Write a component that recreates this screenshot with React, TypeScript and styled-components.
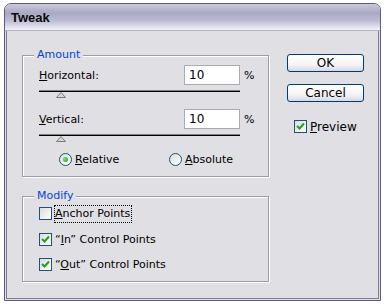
import React from 'react';
import styled, { createGlobalStyle } from 'styled-components';

const Global = createGlobalStyle`
  html, body { margin: 0; padding: 0; background: #fff; }
  body { font-family: "DejaVu Sans", sans-serif; font-size: 11px; color: #000; }
  * { box-sizing: border-box; }
`;

const Window = styled.div`
  margin: 3px 0 0 4px;
  width: 377px;
  height: 298px;
  border: 1px solid #5d5c7e;
  border-radius: 7px 7px 0 0;
  background: #e0dfe3;
  display: flex;
  flex-direction: column;
  overflow: hidden;
`;

const TitleBar = styled.div`
  height: 27px;
  flex: none;
  display: flex;
  align-items: center;
  padding-left: 6px;
  padding-top: 1px;
  background: linear-gradient(#c9c8da 0%, #a9a8c3 35%, #bebdd3 65%, #f1f1f7 100%);
  border-bottom: 1px solid #b4b3c4;
  font-family: "Liberation Sans", Arial, sans-serif;
  font-weight: bold;
  font-size: 13px;
  color: #0a0a0a;
`;

const Body = styled.div`
  flex: 1;
  margin: 0 1px 1px;
  border: 1px solid #7b7a98;
  border-top: none;
  display: flex;
  padding-left: 15px;
`;

const LeftCol = styled.div`
  width: 247px;
  padding-top: 24px;
  display: flex;
  flex-direction: column;
  gap: 19px;
`;

const RightCol = styled.div`
  margin-left: 18px;
  padding-top: 23px;
  width: 77px;
  display: flex;
  flex-direction: column;
`;

const Group = styled.div<{ $h: number }>`
  position: relative;
  height: ${p => p.$h}px;
  border: 1px solid #9d9ca4;
  box-shadow: 1px 1px 0 #fff, inset 1px 1px 0 #fff;
  padding-left: 16px;
`;

const Legend = styled.span`
  position: absolute;
  top: -8px;
  left: 11px;
  padding: 0 3px;
  background: #e0dfe3;
  color: #0046d5;
  line-height: 14px;
`;

const FieldRow = styled.div<{ $top: number }>`
  margin-top: ${p => p.$top}px;
  display: grid;
  grid-template-columns: 141px 56px auto;
  column-gap: 4px;
  align-items: center;
`;

const Label = styled.span``;

const Key = styled.span`
  text-decoration: underline;
`;

const NumInput = styled.div`
  height: 20px;
  background: #fff;
  border: 1px solid #a5acb5;
  padding-left: 4px;
  display: flex;
  align-items: center;
  font-size: 12px;
`;

const Slider = styled.div`
  margin-top: 5px;
  width: 201px;
  height: 8px;
  position: relative;
`;

const Track = styled.div`
  height: 2px;
  border-top: 1px solid #808080;
  border-bottom: 1px solid #000;
`;

const Thumb = styled.svg`
  position: absolute;
  left: 17px;
  top: 2px;
`;

const RadioRow = styled.div`
  margin-top: 11px;
  display: flex;
  padding-left: 20px;
`;

const RadioItem = styled.label<{ $w?: number }>`
  display: flex;
  align-items: center;
  gap: 3px;
  width: ${p => (p.$w ? `${p.$w}px` : 'auto')};
`;

const RadioCircle = styled.span<{ $on?: boolean }>`
  width: 13px;
  height: 13px;
  border-radius: 50%;
  border: 1px solid #1c5180;
  background: linear-gradient(135deg, #dcdcd7, #ffffff);
  display: flex;
  align-items: center;
  justify-content: center;
  &::after {
    content: '';
    display: ${p => (p.$on ? 'block' : 'none')};
    width: 5px;
    height: 5px;
    border-radius: 50%;
    background: radial-gradient(circle at 35% 35%, #6ee36a, #21a121);
  }
`;

const CheckRow = styled.label<{ $top: number }>`
  margin-top: ${p => p.$top}px;
  display: flex;
  align-items: center;
  gap: 3px;
  height: 13px;
`;

const Box = styled.span`
  width: 13px;
  height: 13px;
  flex: none;
  border: 1px solid #1c5180;
  background: linear-gradient(135deg, #dcdcd7, #ffffff);
  display: flex;
  align-items: center;
  justify-content: center;
`;

const Focus = styled.span`
  outline: 1px dotted #000;
  outline-offset: 0px;
  padding: 1px 1px 2px 0px;
`;

const Button = styled.div<{ $top: number }>`
  margin-top: ${p => p.$top}px;
  height: 18px;
  border: 1px solid #003c74;
  border-radius: 3px;
  background: linear-gradient(#ffffff 0%, #f4f4f7 60%, #d8d8e2 100%);
  display: flex;
  align-items: center;
  justify-content: center;
  font-size: 12px;
`;

const PreviewRow = styled.label`
  margin-top: 18px;
  margin-left: 7px;
  display: flex;
  align-items: center;
  gap: 3px;
  height: 13px;
  font-size: 12px;
`;

const Check = () => (
  <svg width="9" height="9" viewBox="0 0 9 9">
    <path d="M1 4 L3.5 6.5 L8 1.5" fill="none" stroke="#21a121" strokeWidth="2" />
  </svg>
);

const ThumbIcon = () => (
  <Thumb width="10" height="6" viewBox="0 0 10 6">
    <polygon points="0.5,5.5 5,0.5 9.5,5.5" fill="#d8d6d0" stroke="#7a7a7a" />
  </Thumb>
);

export default function App() {
  return (
    <>
      <Global />
      <Window>
        <TitleBar>Tweak</TitleBar>
        <Body>
          <LeftCol>
            <Group $h={122}>
              <Legend>Amount</Legend>
              <FieldRow $top={9}>
                <Label><Key>H</Key>orizontal:</Label>
                <NumInput>10</NumInput>
                <span>%</span>
              </FieldRow>
              <Slider>
                <Track />
                <ThumbIcon />
              </Slider>
              <FieldRow $top={11}>
                <Label><Key>V</Key>ertical:</Label>
                <NumInput>10</NumInput>
                <span>%</span>
              </FieldRow>
              <Slider>
                <Track />
                <ThumbIcon />
              </Slider>
              <RadioRow>
                <RadioItem $w={110}>
                  <RadioCircle $on />
                  <span><Key>R</Key>elative</span>
                </RadioItem>
                <RadioItem>
                  <RadioCircle />
                  <span><Key>A</Key>bsolute</span>
                </RadioItem>
              </RadioRow>
            </Group>
            <Group $h={86}>
              <Legend>Modify</Legend>
              <CheckRow $top={10}>
                <Box />
                <Focus><Key>A</Key>nchor Points</Focus>
              </CheckRow>
              <CheckRow $top={13}>
                <Box><Check /></Box>
                <span>“<Key>I</Key>n” Control Points</span>
              </CheckRow>
              <CheckRow $top={12}>
                <Box><Check /></Box>
                <span>“<Key>O</Key>ut” Control Points</span>
              </CheckRow>
            </Group>
          </LeftCol>
          <RightCol>
            <Button $top={0}>OK</Button>
            <Button $top={12}>Cancel</Button>
            <PreviewRow>
              <Box><Check /></Box>
              <span><Key>P</Key>review</span>
            </PreviewRow>
          </RightCol>
        </Body>
      </Window>
    </>
  );
}
